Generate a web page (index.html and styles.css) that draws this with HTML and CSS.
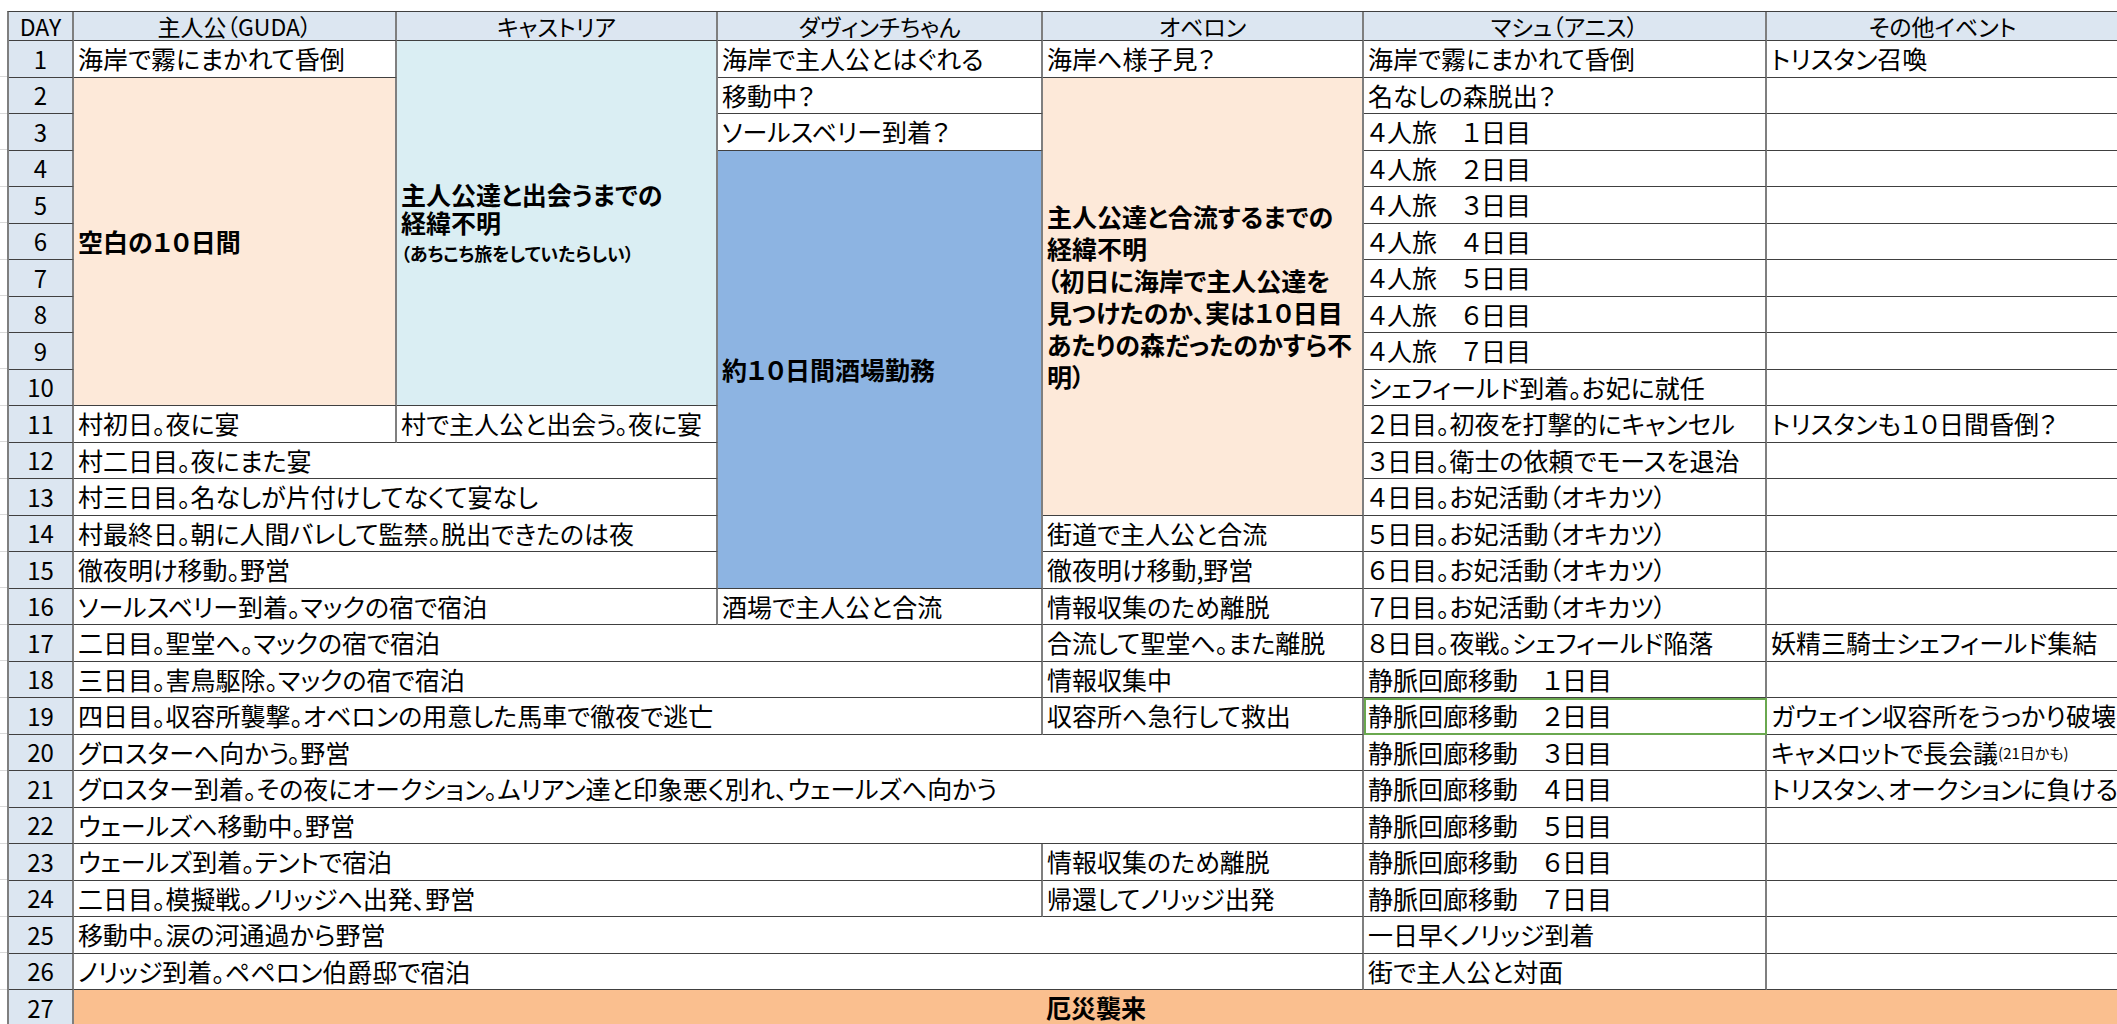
FILE: index.html
```html
<!DOCTYPE html>
<html lang="ja">
<head>
<meta charset="utf-8">
<title>妖精國 日程表</title>
<link rel="stylesheet" href="styles.css">
</head>
<body>
<div class="sheet">
<div class="grid">
  <div class="c hd">DAY</div>
  <div class="c hd">主人公（GUDA）</div>
  <div class="c hd">キャストリア</div>
  <div class="c hd">ダヴィンチちゃん</div>
  <div class="c hd">オベロン</div>
  <div class="c hd">マシュ（アニス）</div>
  <div class="c hd">その他イベント</div>

  <div class="c day">1</div>
  <div class="c">海岸で霧にまかれて昏倒</div>
  <div class="c lblue r10 b"><div class="lines cas">主人公達と出会うまでの<br>経緯不明<br><span class="small">（あちこち旅をしていたらしい）</span></div></div>
  <div class="c">海岸で主人公とはぐれる</div>
  <div class="c">海岸へ様子見？</div>
  <div class="c">海岸で霧にまかれて昏倒</div>
  <div class="c">トリスタン召喚</div>

  <div class="c day">2</div>
  <div class="c peach r9 b">空白の１０日間</div>
  <div class="c">移動中？</div>
  <div class="c peach r12 b"><div class="lines obe">主人公達と合流するまでの<br>経緯不明<br>（初日に海岸で主人公達を<br>見つけたのか、実は１０日目<br>あたりの森だったのかすら不<br>明）</div></div>
  <div class="c">名なしの森脱出？</div>
  <div class="c"></div>

  <div class="c day">3</div>
  <div class="c">ソールスベリー到着？</div>
  <div class="c">４人旅　１日目</div>
  <div class="c"></div>

  <div class="c day">4</div>
  <div class="c blue r12 b">約１０日間酒場勤務</div>
  <div class="c">４人旅　２日目</div>
  <div class="c"></div>

  <div class="c day">5</div>
  <div class="c">４人旅　３日目</div>
  <div class="c"></div>

  <div class="c day">6</div>
  <div class="c">４人旅　４日目</div>
  <div class="c"></div>

  <div class="c day">7</div>
  <div class="c">４人旅　５日目</div>
  <div class="c"></div>

  <div class="c day">8</div>
  <div class="c">４人旅　６日目</div>
  <div class="c"></div>

  <div class="c day">9</div>
  <div class="c">４人旅　７日目</div>
  <div class="c"></div>

  <div class="c day">10</div>
  <div class="c">シェフィールド到着。お妃に就任</div>
  <div class="c"></div>

  <div class="c day">11</div>
  <div class="c">村初日。夜に宴</div>
  <div class="c">村で主人公と出会う。夜に宴</div>
  <div class="c">２日目。初夜を打撃的にキャンセル</div>
  <div class="c">トリスタンも１０日間昏倒？</div>

  <div class="c day">12</div>
  <div class="c s2">村二日目。夜にまた宴</div>
  <div class="c">３日目。衛士の依頼でモースを退治</div>
  <div class="c"></div>

  <div class="c day">13</div>
  <div class="c s2">村三日目。名なしが片付けしてなくて宴なし</div>
  <div class="c">４日目。お妃活動（オキカツ）</div>
  <div class="c"></div>

  <div class="c day">14</div>
  <div class="c s2">村最終日。朝に人間バレして監禁。脱出できたのは夜</div>
  <div class="c">街道で主人公と合流</div>
  <div class="c">５日目。お妃活動（オキカツ）</div>
  <div class="c"></div>

  <div class="c day">15</div>
  <div class="c s2">徹夜明け移動。野営</div>
  <div class="c">徹夜明け移動,野営</div>
  <div class="c">６日目。お妃活動（オキカツ）</div>
  <div class="c"></div>

  <div class="c day">16</div>
  <div class="c s2">ソールスベリー到着。マックの宿で宿泊</div>
  <div class="c">酒場で主人公と合流</div>
  <div class="c">情報収集のため離脱</div>
  <div class="c">７日目。お妃活動（オキカツ）</div>
  <div class="c"></div>

  <div class="c day">17</div>
  <div class="c s3">二日目。聖堂へ。マックの宿で宿泊</div>
  <div class="c">合流して聖堂へ。また離脱</div>
  <div class="c">８日目。夜戦。シェフィールド陥落</div>
  <div class="c">妖精三騎士シェフィールド集結</div>

  <div class="c day">18</div>
  <div class="c s3">三日目。害鳥駆除。マックの宿で宿泊</div>
  <div class="c">情報収集中</div>
  <div class="c">静脈回廊移動　１日目</div>
  <div class="c"></div>

  <div class="c day">19</div>
  <div class="c s3">四日目。収容所襲撃。オベロンの用意した馬車で徹夜で逃亡</div>
  <div class="c">収容所へ急行して救出</div>
  <div class="c sel">静脈回廊移動　２日目</div>
  <div class="c">ガウェイン収容所をうっかり破壊</div>

  <div class="c day">20</div>
  <div class="c s4">グロスターへ向かう。野営</div>
  <div class="c">静脈回廊移動　３日目</div>
  <div class="c">キャメロットで長会議<span class="tiny">(21日かも)</span></div>

  <div class="c day">21</div>
  <div class="c s4">グロスター到着。その夜にオークション。ムリアン達と印象悪く別れ、ウェールズへ向かう</div>
  <div class="c">静脈回廊移動　４日目</div>
  <div class="c">トリスタン、オークションに負ける</div>

  <div class="c day">22</div>
  <div class="c s4">ウェールズへ移動中。野営</div>
  <div class="c">静脈回廊移動　５日目</div>
  <div class="c"></div>

  <div class="c day">23</div>
  <div class="c s3">ウェールズ到着。テントで宿泊</div>
  <div class="c">情報収集のため離脱</div>
  <div class="c">静脈回廊移動　６日目</div>
  <div class="c"></div>

  <div class="c day">24</div>
  <div class="c s3">二日目。模擬戦。ノリッジへ出発、野営</div>
  <div class="c">帰還してノリッジ出発</div>
  <div class="c">静脈回廊移動　７日目</div>
  <div class="c"></div>

  <div class="c day">25</div>
  <div class="c s4">移動中。涙の河通過から野営</div>
  <div class="c">一日早くノリッジ到着</div>
  <div class="c"></div>

  <div class="c day">26</div>
  <div class="c s4">ノリッジ到着。ペペロン伯爵邸で宿泊</div>
  <div class="c">街で主人公と対面</div>
  <div class="c"></div>

  <div class="c day">27</div>
  <div class="c s6 orange b center">厄災襲来</div>
</div>
</div>
</body>
</html>
```

FILE: styles.css
```css
html, body {
  margin: 0;
  padding: 0;
  background: #ffffff;
}

body {
  width: 2117px;
  height: 1024px;
  overflow: hidden;
  font-family: "Noto Sans CJK JP", "Noto Sans", sans-serif;
  font-feature-settings: "palt";
  color: #000000;
}

.sheet {
  padding: 11px 0 0 7px;
  height: 1024px;
  box-sizing: border-box;
  background-image: repeating-linear-gradient(to bottom, transparent 0, transparent 35.5px, #d9d9d9 35.5px, #d9d9d9 36.5px);
  background-size: 7px 1100px;
  background-repeat: no-repeat;
  background-position: 0 41px;
}

.grid {
  display: grid;
  grid-template-columns: 65px 323px 321px 325px 321px 403px 353px;
  grid-template-rows: 29px repeat(27, 36.5px);
  border-left: 2px solid #7f7f7f;
  border-top: 1px solid #404040;
  width: max-content;
}

.c {
  box-sizing: border-box;
  border-right: 2px solid #7f7f7f;
  border-bottom: 1px solid #404040;
  display: flex;
  align-items: center;
  padding: 0 4px;
  font-size: 25px;
  line-height: 1;
  white-space: nowrap;
  overflow: hidden;
  background: #ffffff;
}

.hd {
  background: #dce6f1;
  justify-content: center;
  font-size: 23px;
  line-height: 27px;
  overflow: visible;
}

.day {
  background: #dce6f1;
  justify-content: center;
  font-size: 24px;
}

.center {
  justify-content: center;
}

.peach { background: #fde9d9; }
.lblue { background: #daeef3; }
.blue { background: #8db4e2; }
.orange { background: #fabf8f; }

.b { font-weight: 700; }

.r9 { grid-row: span 9; }
.r10 { grid-row: span 10; }
.r12 { grid-row: span 12; }

.s2 { grid-column: span 2; }
.s3 { grid-column: span 3; }
.s4 { grid-column: span 4; }
.s6 { grid-column: span 6; }

.lines {
  display: block;
}

.cas {
  line-height: 28px;
}

.obe {
  line-height: 32px;
}

.small {
  font-size: 18px;
}

.tiny {
  font-size: 15px;
}

.sel {
  outline: 2px solid #6aa84f;
  outline-offset: -2px;
}
```
